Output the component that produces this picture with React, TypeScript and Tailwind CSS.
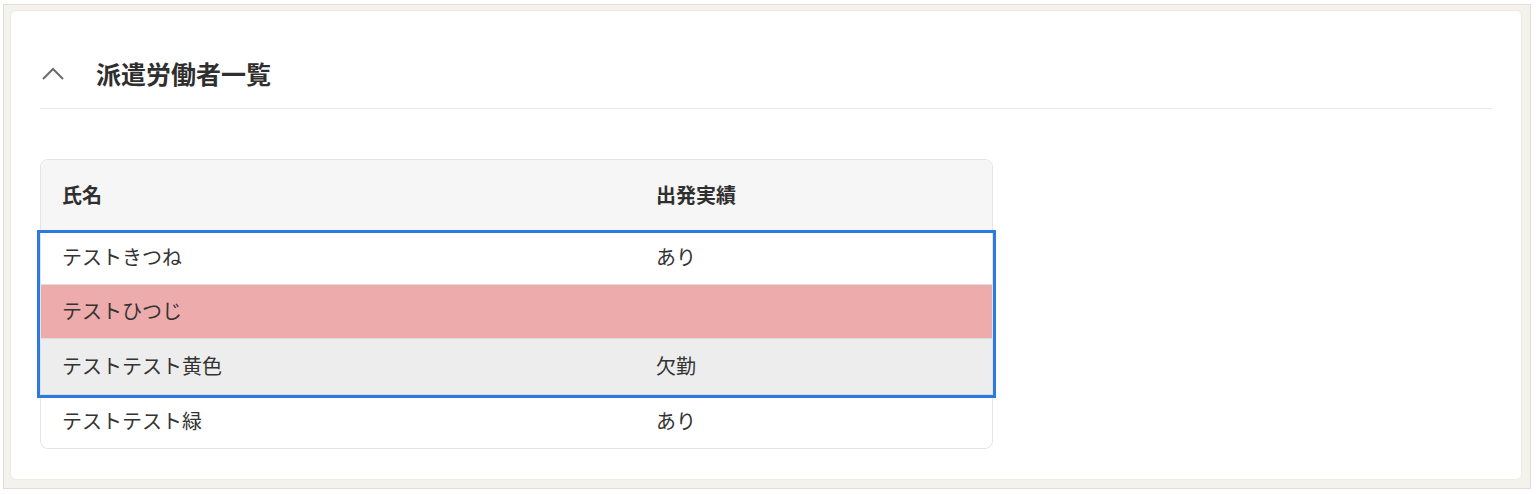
const rows = [
  { name: "テストきつね", result: "あり", tone: "bg-white", h: "h-[54px]" },
  { name: "テストひつじ", result: "", tone: "bg-[#eeabab]", h: "h-[54px]" },
  { name: "テストテスト黄色", result: "欠勤", tone: "bg-[#ededed]", h: "h-[56px]" },
];

function Row({ name, result, tone, h, last }: { name: string; result: string; tone: string; h: string; last?: boolean }) {
  return (
    <div className={`grid grid-cols-[594px_1fr] ${h} items-center pb-[2px] text-[20px] text-[#333] ${tone} ${last ? "rounded-b-lg" : "border-b border-[#dcdcdc]"}`}>
      <div className="pl-[21px]">{name}</div>
      <div className="pl-[21px]">{result}</div>
    </div>
  );
}

export default function App() {
  return (
    <div
      className="bg-white pt-[4px] pl-[3px] pr-[5px] pb-[5px]"
      style={{ fontFamily: '"Noto Sans CJK JP", "Noto Sans", sans-serif' }}
    >
      <div className="border border-[#deded9] bg-[#f3f2ed] pt-[5px] pl-[6px] pr-[8px] pb-[8px]">
        <div className="bg-white rounded-md border border-[#ebeae5] px-[29px] pt-[39px] pb-[30px]">
          {/* Section header */}
          <div className="border-b border-[#e8e8e6] pb-[10px]">
            <div className="flex items-center h-[48px] gap-[30px]">
              <svg width="26" height="16" viewBox="0 0 26 16" fill="none">
                <polyline points="3,13 13,3 23,13" stroke="#6b6b6b" strokeWidth="2" />
              </svg>
              <h2 className="text-[25px] font-bold text-[#2f2f2f]">派遣労働者一覧</h2>
            </div>
          </div>

          {/* Table */}
          <div className="mt-[50px] w-[953px] border border-[#e4e4e4] rounded-lg">
            <div className="grid grid-cols-[594px_1fr] h-[71px] items-center pb-[2px] bg-[#f6f6f6] rounded-t-lg text-[20px] font-bold text-[#2f2f2f]">
              <div className="pl-[21px]">氏名</div>
              <div className="pl-[21px]">出発実績</div>
            </div>
            <div className="relative">
              {rows.map((r) => (
                <Row key={r.name} {...r} />
              ))}
              <div className="absolute -left-[4px] -right-[4px] -top-[1px] -bottom-[3px] border-[3px] border-[#2a7ae2] pointer-events-none" />
            </div>
            <Row name="テストテスト緑" result="あり" tone="bg-white" h="h-[53px]" last />
          </div>
        </div>
      </div>
    </div>
  );
}
